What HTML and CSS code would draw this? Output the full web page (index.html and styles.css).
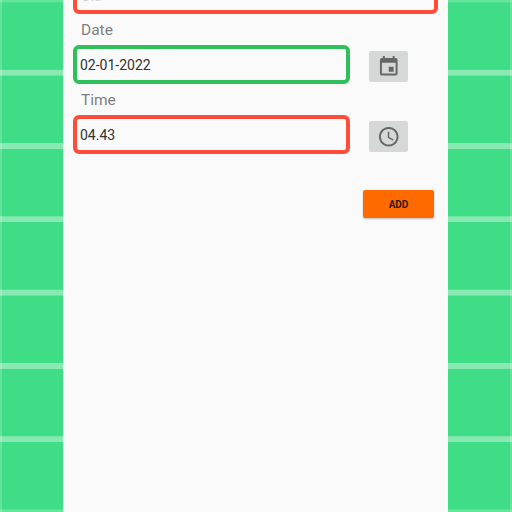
FILE: index.html
```html
<!DOCTYPE html>
<html lang="en">
<head>
<meta charset="utf-8">
<title>Add reminder</title>
<link rel="stylesheet" href="styles.css">
</head>
<body>
<main class="screen">
  <div class="field field-title invalid">Ola</div>
  <label class="label">Date</label>
  <div class="row">
    <div class="field valid">02-01-2022</div>
    <button class="pick" aria-label="Pick date">
      <svg viewBox="0 0 24 24"><path d="M17 12h-5v5h5v-5zM16 1v2H8V1H6v2H5c-1.11 0-1.99.9-1.99 2L3 19c0 1.1.89 2 2 2h14c1.1 0 2-.9 2-2V5c0-1.1-.9-2-2-2h-1V1h-2zm3 18H5V8h14v11z"/></svg>
    </button>
  </div>
  <label class="label label-time">Time</label>
  <div class="row">
    <div class="field invalid">04.43</div>
    <button class="pick" aria-label="Pick time">
      <svg viewBox="0 0 24 24"><path d="M11.99 2C6.47 2 2 6.48 2 12s4.47 10 9.99 10C17.52 22 22 17.52 22 12S17.52 2 11.99 2zM12 20c-4.42 0-8-3.58-8-8s3.58-8 8-8 8 3.58 8 8-3.58 8-8 8zm.5-13H11v6l5.25 3.15.75-1.23-4.5-2.67z"/></svg>
    </button>
  </div>
  <button class="add">ADD</button>
</main>
</body>
</html>
```
FILE: styles.css
```css
* { box-sizing: border-box; }
body {
  margin: 0;
  height: 512px;
  overflow: hidden;
  display: flex;
  padding-left: 63px;
  font-family: Roboto, "Liberation Sans", sans-serif;
  background:
    linear-gradient(90deg, rgba(255,255,255,.2) 0 2.5px, transparent 2.5px 510px, rgba(255,255,255,.2) 510px),
    linear-gradient(180deg, #67e49b 0 2px, transparent 2px 510px, #67e49b 510px),
    repeating-linear-gradient(180deg, #88eab2 0 2px, #3fdd85 2.6px 69.4px, #88eab2 70.2px 73.3px);
}
.screen {
  width: 385px;
  height: 512px;
  padding: 0 10px;
  background: #fafafa;
  display: flex;
  flex-direction: column;
}
.field {
  width: 277px;
  height: 39px;
  border: 4px solid;
  border-radius: 6px;
  padding-left: 3px;
  font-size: 14px;
  line-height: 32px;
  color: #333;
}
.valid { border-color: #2fbf5b; }
.invalid { border-color: #ff4d3a; }
.field-title {
  width: 365px;
  margin-top: -25px;
  line-height: 34px;
  padding-left: 4px;
  color: #d2d2d2;
}
.label {
  height: 31px;
  padding-left: 8px;
  font-size: 15.5px;
  line-height: 32px;
  color: #808080;
}
.row { display: flex; height: 39px; align-items: flex-start; }
.label-time { line-height: 33px; }
.pick {
  width: 39px;
  height: 31px;
  margin: 6px 0 0 19px;
  padding: 0;
  border: 0;
  border-radius: 2px;
  background: #d6d7d7;
  display: flex;
  align-items: center;
  justify-content: center;
}
.pick svg { width: 23.5px; height: 23.5px; fill: #666; }
.add {
  width: 71px;
  height: 28px;
  margin: 36px 4px 0 auto;
  padding: 0;
  border: 0;
  border-radius: 2px;
  background: #ff6a00;
  box-shadow: 0 1px 2px rgba(0,0,0,.25);
  font: 700 10px Roboto, sans-serif;
  color: #33190a;
}
```
